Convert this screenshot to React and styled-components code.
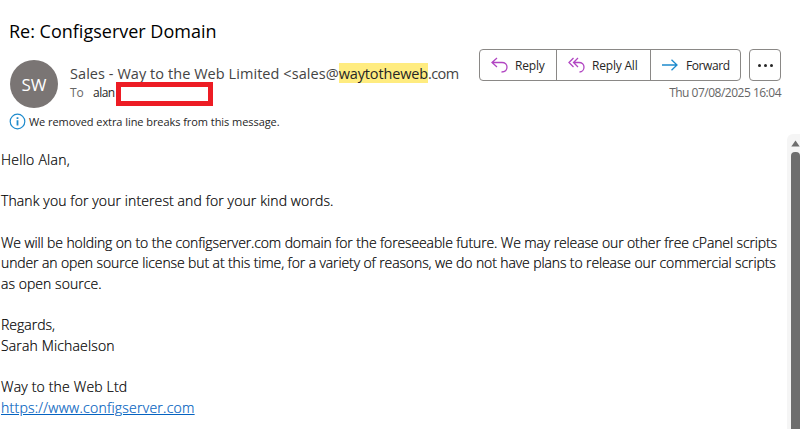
import React from 'react'
import styled, { createGlobalStyle } from 'styled-components'

const bodyLines = [
  { text: 'Hello Alan,', spacing: 0.25 },
  {},
  { text: 'Thank you for your interest and for your kind words.', spacing: 0.11 },
  {},
  { text: 'We will be holding on to the configserver.com domain for the foreseeable future. We may release our other free cPanel scripts', spacing: -0.12 },
  { text: 'under an open source license but at this time, for a variety of reasons, we do not have plans to release our commercial scripts', spacing: -0.11 },
  { text: 'as open source.', spacing: 0.05 },
  {},
  { text: 'Regards,' },
  { text: 'Sarah Michaelson', spacing: 0.15 },
  {},
  { text: 'Way to the Web Ltd', spacing: 0.18 },
  { text: 'https://www.configserver.com', spacing: 0.25, link: true },
]

function ReplyIcon() {
  return (
    <Icon width="17" height="16" viewBox="0 0 17 16" $color="#b146c2">
      <path d="M6 1 L1 5.5 L6 10 M1 5.5 H11 C14 5.5 16 7.5 16 10 C16 13 13.8 15 10.5 15" />
    </Icon>
  )
}

function ReplyAllIcon() {
  return (
    <Icon width="17" height="16" viewBox="0 0 17 16" $color="#b146c2">
      <path d="M5.5 1 L1 5.5 L5.5 10 M10 1 L5.5 5.5 L10 10 M5.5 5.5 H11 C14 5.5 16 7.5 16 10 C16 13 14 15 11.5 15" />
    </Icon>
  )
}

function ForwardIcon() {
  return (
    <Icon width="16" height="12" viewBox="0 0 16 12" $color="#1e8bcd">
      <path d="M0 6 H15 M9.5 0.7 L15 6 L9.5 11.3" />
    </Icon>
  )
}

export default function App() {
  return (
    <Page>
      <GlobalStyle />
      <Subject>Re: Configserver Domain</Subject>
      <Header>
        <Avatar>SW</Avatar>
        <Sender>
          <From>
            Sales - Way to the Web Limited &lt;sales@<mark>waytotheweb</mark><small>.com</small>
          </From>
          <To>
            <span>To</span>
            <b>alan</b>
            <Redacted />
          </To>
        </Sender>
        <Side>
          <Actions>
            <Group>
              <Action $width={77}><ReplyIcon />Reply</Action>
              <Action $width={94}><ReplyAllIcon />Reply All</Action>
              <Action $width={89}><ForwardIcon />Forward</Action>
            </Group>
            <More>
              <i /><i /><i />
            </More>
          </Actions>
          <Sent>Thu 07/08/2025 16:04</Sent>
        </Side>
      </Header>
      <Notice>
        <svg width="17" height="17" viewBox="0 0 17 17">
          <circle cx="8.5" cy="8.5" r="7.3" fill="none" stroke="#1e8bcd" strokeWidth="1.2" />
          <path d="M8.5 4.3 V6 M8.5 7.3 V12.5" stroke="#1e8bcd" strokeWidth="1.8" />
        </svg>
        We removed extra line breaks from this message.
      </Notice>
      <Content>
        <Message>
          {bodyLines.map((line, i) => (
            <Line key={i} $spacing={line.spacing}>
              {line.link ? <a href={line.text}>{line.text}</a> : line.text}
            </Line>
          ))}
        </Message>
        <Scrollbar>
          <svg width="9" height="7" viewBox="0 0 9 7">
            <path d="M4.5 0.5 L8.7 6.5 H0.3 Z" fill="#6e6e6e" />
          </svg>
          <Thumb />
        </Scrollbar>
      </Content>
    </Page>
  )
}

const GlobalStyle = createGlobalStyle`
  body {
    margin: 0;
    background: #fff;
    overflow: hidden;
  }
  * {
    box-sizing: border-box;
  }
`

const Page = styled.div`
  width: 800px;
  height: 429px;
  display: flex;
  flex-direction: column;
  overflow: hidden;
  font-family: "Open Sans", "Noto Sans", sans-serif;
  color: #262626;
  white-space: nowrap;
`

const Subject = styled.h1`
  margin: 0;
  padding: 18px 0 0 9px;
  height: 49px;
  font-size: 18px;
  line-height: 26px;
  font-weight: 400;
  color: #000;
`

const Header = styled.header`
  display: flex;
  height: 61px;
  padding-left: 10px;
`

const Avatar = styled.div`
  width: 48px;
  height: 48px;
  margin-top: 11px;
  border-radius: 50%;
  background: #7a7574;
  color: #fff;
  display: flex;
  align-items: center;
  justify-content: center;
  font-size: 17px;
`

const Sender = styled.div`
  width: 389px;
  margin-left: 12px;
  padding-top: 14px;
`

const From = styled.div`
  height: 20px;
  line-height: 21px;
  font-size: 14.5px;
  letter-spacing: 0.06px;
  color: #444;

  mark {
    display: inline-block;
    height: 20px;
    background: #ffec80;
    color: #262626;
    letter-spacing: -0.15px;
  }

  small {
    font-size: 14.5px;
    letter-spacing: -0.6px;
  }
`

const To = styled.div`
  display: flex;
  height: 24px;
  margin-top: -1px;
  font-size: 12px;
  line-height: 21px;
  color: #666;

  span {
    width: 23px;
  }

  b {
    width: 23px;
    font-weight: 400;
    letter-spacing: -0.5px;
    color: #262626;
  }
`

const Redacted = styled.div`
  width: 97px;
  height: 24px;
  border: 5px solid #ed1c24;
  background: #fff;
`

const Side = styled.div`
  width: 302px;
  margin-left: 20px;
`

const Actions = styled.div`
  display: flex;
  gap: 8px;
`

const Group = styled.div`
  display: flex;
  height: 32px;
  border: 1px solid #8a8886;
  border-radius: 4px;
`

const Action = styled.button`
  width: ${(p) => p.$width}px;
  display: flex;
  align-items: center;
  gap: 7px;
  padding: 0 0 0 11px;
  border: 0;
  border-right: 1px solid #8a8886;
  background: none;
  font: 12px "Open Sans", sans-serif;
  letter-spacing: -0.2px;
  color: #262626;

  &:last-child {
    gap: 8px;
    letter-spacing: -0.4px;
    border-right: 0;
  }
`

const Icon = styled.svg`
  flex: none;
  fill: none;
  stroke: ${(p) => p.$color};
  stroke-width: 1.3;
`

const More = styled.button`
  width: 32px;
  height: 32px;
  padding: 0;
  display: flex;
  align-items: center;
  justify-content: center;
  gap: 3px;
  border: 1px solid #8a8886;
  border-radius: 4px;
  background: none;

  i {
    width: 3px;
    height: 3px;
    border-radius: 50%;
    background: #262626;
  }
`

const Sent = styled.div`
  margin-top: 3px;
  text-align: right;
  font-size: 12px;
  line-height: 18px;
  letter-spacing: -0.5px;
  color: #666;
`

const Notice = styled.div`
  display: flex;
  align-items: center;
  gap: 3px;
  height: 23px;
  padding-left: 9px;
  font-size: 11px;
  letter-spacing: -0.06px;
`

const Content = styled.main`
  flex: 1;
  display: flex;
  min-height: 0;
`

const Message = styled.div`
  width: 787px;
  padding: 17px 0 0 1px;
  font-family: "Open Sans", sans-serif;
  font-size: 14px;
  font-weight: 300;
  -webkit-text-stroke-width: 0.2px;
  color: #000;
`

const Line = styled.div`
  height: 20.65px;
  line-height: 20.65px;
  letter-spacing: ${(p) => p.$spacing || 0}px;

  a {
    color: #0563c1;
    text-decoration: underline;
  }
`

const Scrollbar = styled.div`
  width: 13px;
  display: flex;
  flex-direction: column;
  align-items: center;
  padding: 6px 0 0 3px;
  margin-top: 1px;
  background: #f5f5f5;
  border-radius: 6px 0 0 0;

  svg {
    flex: none;
  }
`

const Thumb = styled.div`
  flex: 1;
  width: 9px;
  margin-top: 5px;
  border-radius: 4px 4px 0 0;
  background: #6e6e6e;
`
